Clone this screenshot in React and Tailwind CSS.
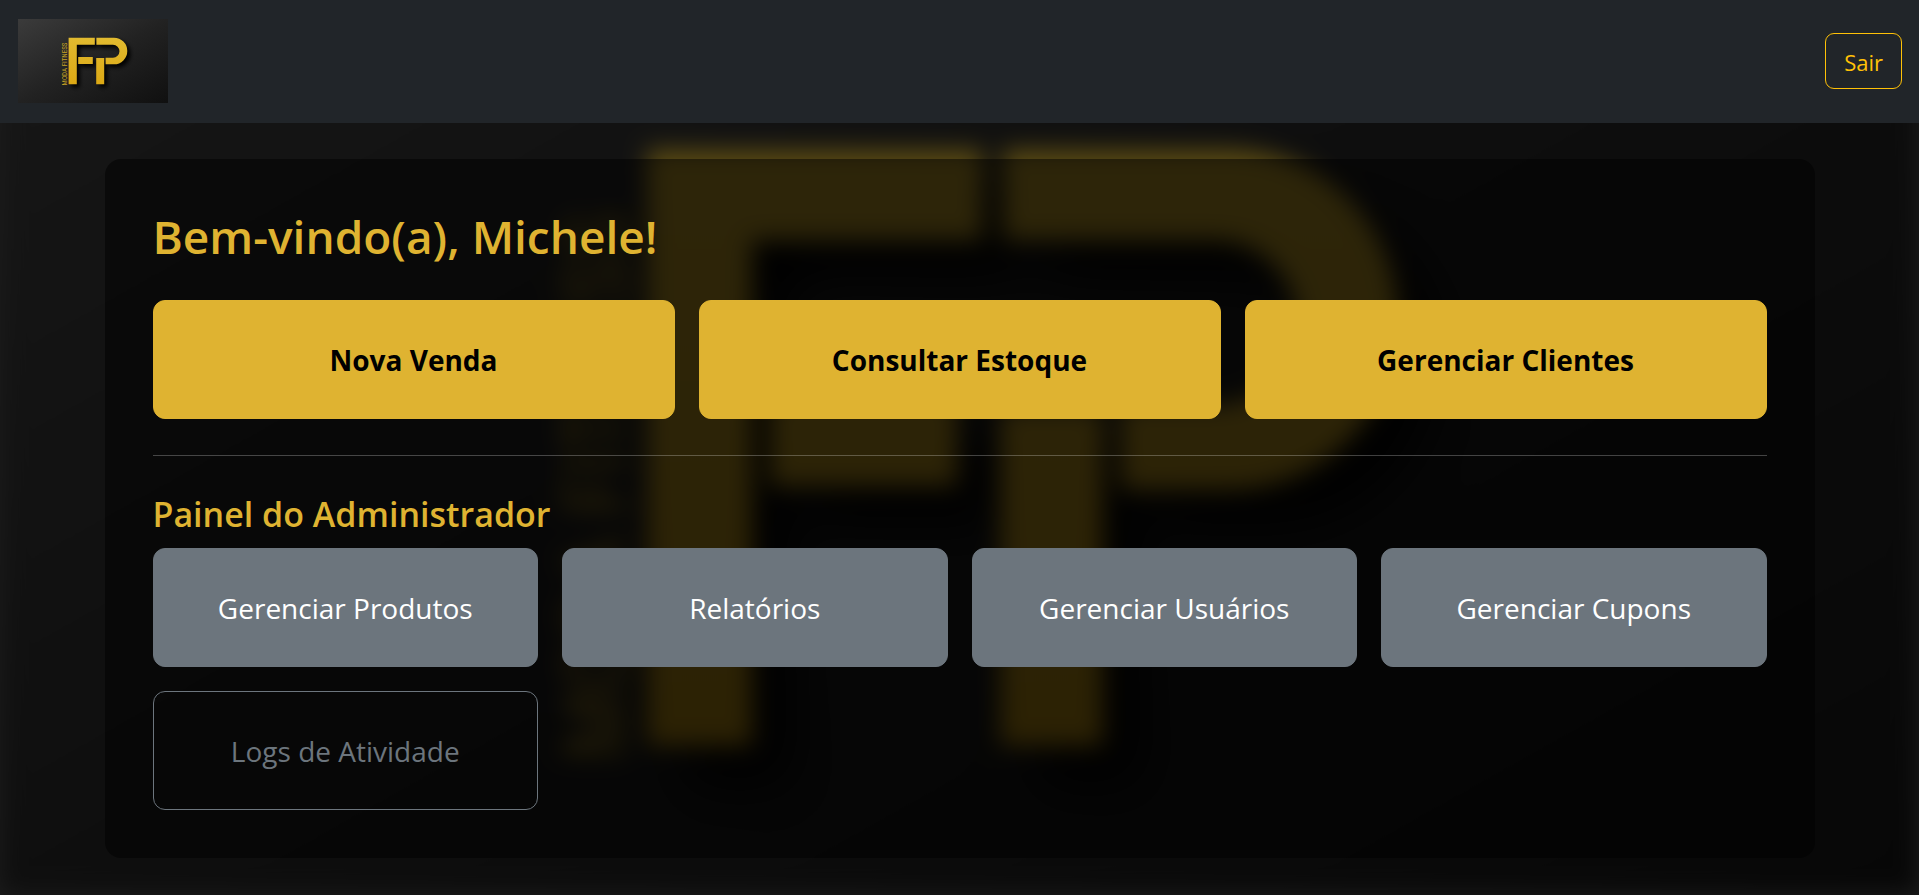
import React, { useId } from "react";

const letterShapes = [
  "M50.6 18.700H76.800V25.800H58.800V65.300H50.600Z",
  "M78.400 18.700H96A13.300 13.300 0 0 1 96 45.300H87.600V38.700H95A6.400 6.400 0 0 0 95 25.800H78.400Z",
  "M60.200 38H74.800V45H60.200Z M78.200 39H86.200V65.300H78.200Z",
];

function Logo({ className, label }) {
  const id = useId();
  return (
    <svg
      viewBox="0 0 150 84"
      preserveAspectRatio="xMidYMid slice"
      className={className}
      role={label ? "img" : undefined}
      aria-label={label}
      aria-hidden={label ? undefined : true}
    >
      <defs>
        <linearGradient id={`${id}-bg`} x1="0" y1="0" x2="1" y2="1">
          <stop offset="0" stopColor="#3b3b3b" />
          <stop offset="0.5" stopColor="#222222" />
          <stop offset="1" stopColor="#101010" />
        </linearGradient>
        <linearGradient id={`${id}-gold`} gradientUnits="userSpaceOnUse" x1="0" y1="18" x2="0" y2="66">
          <stop offset="0" stopColor="#e2bb30" />
          <stop offset="1" stopColor="#dca814" />
        </linearGradient>
        <filter id={`${id}-shadow`} x="-20%" y="-20%" width="150%" height="150%">
          <feGaussianBlur stdDeviation="2" />
        </filter>
      </defs>
      <rect width="150" height="84" fill={`url(#${id}-bg)`} />
      <g fill="#000000" transform="translate(3 3)" filter={`url(#${id}-shadow)`}>
        {letterShapes.map((d) => (
          <path key={d} d={d} />
        ))}
      </g>
      <g fill={`url(#${id}-gold)`}>
        {letterShapes.map((d) => (
          <path key={d} d={d} />
        ))}
      </g>
      <text
        transform="translate(49 45) rotate(-90)"
        textAnchor="middle"
        fontFamily="'Roboto Condensed', 'Open Sans Condensed', 'Liberation Sans', sans-serif"
        fontSize="7"
        fill="#c9a424"
      >
        MODA FITNESS
      </text>
    </svg>
  );
}

const tile =
  "flex items-center justify-center rounded-xl border px-4 pt-[37px] pb-[35px] text-center text-[28px] leading-[45px]";

const variants = {
  main: "border-[#dfb331] bg-[#dfb331] font-bold text-black",
  solid: "border-[#6c757d] bg-[#6c757d] text-white",
  outline: "border-[#6c757d] text-[#6c757d]",
};

function Shortcut({ children, variant = "solid" }) {
  return (
    <a href="#" className={`${tile} ${variants[variant]}`}>
      {children}
    </a>
  );
}

const mainLinks = ["Nova Venda", "Consultar Estoque", "Gerenciar Clientes"];
const adminLinks = ["Gerenciar Produtos", "Relatórios", "Gerenciar Usuários", "Gerenciar Cupons"];

export default function App() {
  return (
    <div className="bg-white font-['Open_Sans','Noto_Sans',sans-serif]">
      <div className="relative isolate overflow-hidden bg-[#1c1c1c]">
        <div className="absolute inset-0 -z-10">
          <Logo className="h-full w-full blur-[12px] brightness-40" />
        </div>

        <header className="flex items-center justify-between bg-[#212529] pt-[19px] pr-[17px] pb-5 pl-[18px]">
          <a href="#">
            <Logo label="FP Moda Fitness" className="h-[84px] w-[150px]" />
          </a>
          <button
            type="button"
            className="rounded-[9px] border border-[#ffc107] px-[18px] pt-[10px] pb-2 text-[22px] leading-9 text-[#ffc107]"
          >
            Sair
          </button>
        </header>

        <main className="pt-9 pb-[37px]">
          <section className="mx-auto w-[calc(100%-209px)] rounded-2xl bg-black/50 p-12">
            <h1 className="mb-[34px] text-[46px] leading-[59px] font-semibold text-[#dfb331]">
              Bem-vindo(a), Michele!
            </h1>
            <div className="grid grid-cols-3 gap-6">
              {mainLinks.map((text) => (
                <Shortcut key={text} variant="main">
                  {text}
                </Shortcut>
              ))}
            </div>
            <hr className="my-9 border-t border-white/25" />
            <h2 className="mb-3 text-[34px] leading-[44px] font-semibold text-[#dfb331]">Painel do Administrador</h2>
            <div className="grid grid-cols-4 gap-6">
              {adminLinks.map((text) => (
                <Shortcut key={text}>{text}</Shortcut>
              ))}
              <Shortcut variant="outline">Logs de Atividade</Shortcut>
            </div>
          </section>
        </main>
      </div>
    </div>
  );
}
